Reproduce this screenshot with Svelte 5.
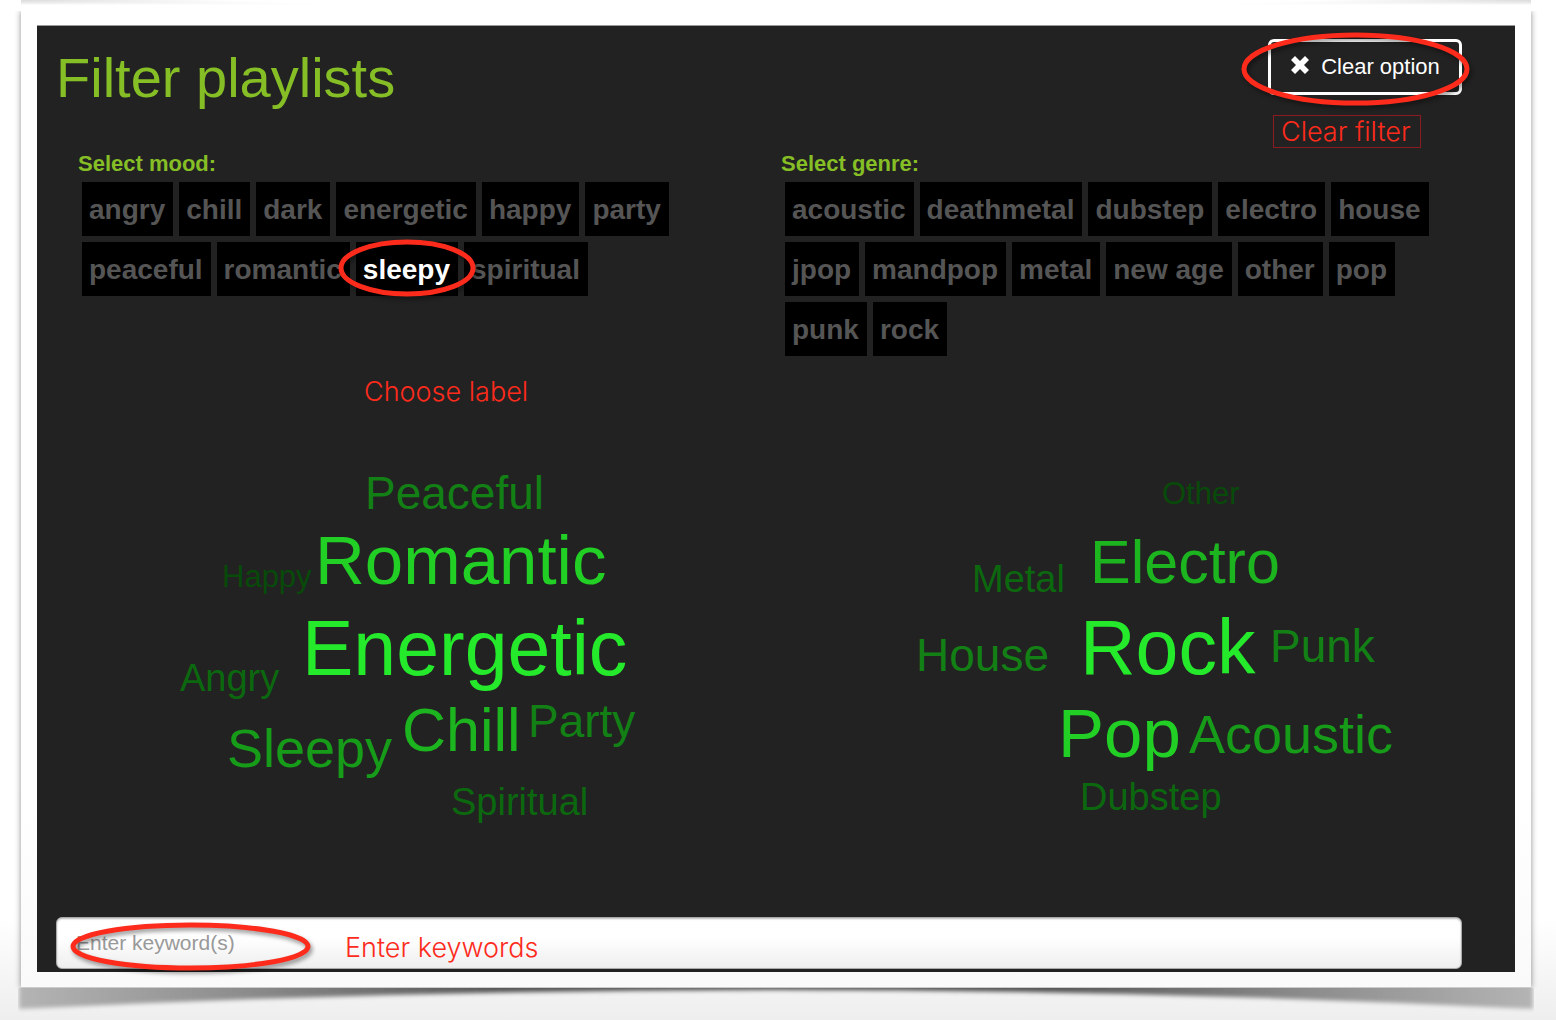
<script>
  const moods = ['angry', 'chill', 'dark', 'energetic', 'happy', 'party', 'peaceful', 'romantic', 'sleepy', 'spiritual'];
  const genres = ['acoustic', 'deathmetal', 'dubstep', 'electro', 'house', 'jpop', 'mandpop', 'metal', 'new age', 'other', 'pop', 'punk', 'rock'];
  let selected = $state('sleepy');
  let keywords = $state('');

  // x is the left edge and y the baseline of each word inside its cloud
  const moodCloud = [
    { text: 'Peaceful', size: 46, x: 186, y: 69 },
    { text: 'Romantic', size: 69, x: 136, y: 145 },
    { text: 'Happy', size: 31, x: 43, y: 147 },
    { text: 'Energetic', size: 77, x: 123, y: 235 },
    { text: 'Angry', size: 38, x: 1, y: 251 },
    { text: 'Chill', size: 61, x: 223, y: 312 },
    { text: 'Party', size: 46, x: 349, y: 297 },
    { text: 'Sleepy', size: 54, x: 48, y: 327 },
    { text: 'Spiritual', size: 38, x: 272, y: 375 }
  ];
  const genreCloud = [
    { text: 'Other', size: 31, x: 280, y: 64 },
    { text: 'Electro', size: 61, x: 208, y: 144 },
    { text: 'Metal', size: 38, x: 90, y: 152 },
    { text: 'House', size: 46, x: 34, y: 231 },
    { text: 'Rock', size: 77, x: 198, y: 234 },
    { text: 'Punk', size: 46, x: 388, y: 222 },
    { text: 'Pop', size: 69, x: 176, y: 318 },
    { text: 'Acoustic', size: 54, x: 307, y: 313 },
    { text: 'Dubstep', size: 38, x: 198, y: 370 }
  ];
  const tones = { 31: '#084a0a', 38: '#0c680f', 46: '#128015', 54: '#179c1a', 61: '#1cb41f', 69: '#21cf25', 77: '#25ea2b' };
</script>

{#snippet ring(kind)}
  <svg class="ring {kind}" viewBox="0 0 100 100" preserveAspectRatio="none" aria-hidden="true">
    <ellipse cx="50" cy="50" rx="50" ry="50" vector-effect="non-scaling-stroke" />
  </svg>
{/snippet}

{#snippet cloud(words)}
  <div class="cloud">
    {#each words as w}
      <span style="left:{w.x}px; top:{w.y - Math.round(w.size * 0.85)}px; font-size:{w.size}px; color:{tones[w.size]}">{w.text}</span>
    {/each}
  </div>
{/snippet}

{#snippet tagGroup(title, tags)}
  <section>
    <h2>{title}</h2>
    <div class="tags">
      {#each tags as tag}
        <button class="tag" class:on={selected === tag} onclick={() => (selected = tag)}>
          {tag}
          {#if tag === 'sleepy'}{@render ring('around-tag')}{/if}
        </button>
      {/each}
    </div>
  </section>
{/snippet}

<div class="page">
  <div class="previous"></div>
  <div class="sheet">
    <main>
      <header>
        <h1>Filter playlists</h1>
        <div class="clear">
          <button class="clear-button" onclick={() => (selected = '')}>
            <svg class="cross" viewBox="0 0 20 20" aria-hidden="true">
              <path d="M5 1 10 6 15 1 19 5 14 10 19 15 15 19 10 14 5 19 1 15 6 10 1 5Z" />
            </svg>
            Clear option
            {@render ring('around-clear')}
          </button>
          <span class="note boxed">Clear filter</span>
        </div>
      </header>

      <div class="filters">
        {@render tagGroup('Select mood:', moods)}
        {@render tagGroup('Select genre:', genres)}
      </div>
      <p class="note choose">Choose label</p>

      <div class="clouds">
        {@render cloud(moodCloud)}
        {@render cloud(genreCloud)}
      </div>

      <div class="search">
        <input type="text" aria-label="Enter keyword(s)" placeholder="Enter keyword(s)" bind:value={keywords} />
        {@render ring('around-input')}
        <span class="note keywords">Enter keywords</span>
      </div>
    </main>
  </div>
  <svg class="curl" viewBox="0 0 1516 32" preserveAspectRatio="none" aria-hidden="true">
    <defs>
      <linearGradient id="curl-tone">
        <stop offset="0" stop-color="#b4b4b4" />
        <stop offset="0.15" stop-color="#8c8c8c" />
        <stop offset="0.32" stop-color="#555" />
        <stop offset="0.68" stop-color="#555" />
        <stop offset="0.85" stop-color="#8c8c8c" />
        <stop offset="1" stop-color="#b4b4b4" />
      </linearGradient>
      <filter id="curl-soft" x="-2%" y="-50%" width="104%" height="200%"><feGaussianBlur stdDeviation="2" /></filter>
    </defs>
    <path d="M1-10V21Q380 2 758 2T1515 21V-10Z" fill="url(#curl-tone)" filter="url(#curl-soft)" />
  </svg>
</div>

<style>
  :global(body) { background: #fff; }
  .page {
    box-sizing: border-box;
    min-height: 100vh;
    padding: 0 25px 0 21px;
    overflow: hidden;
    background: linear-gradient(#fff 0, #fff 90%, #eee 100%);
    font-family: "Liberation Sans", Arial, sans-serif;
  }
  .previous {
    height: 11px;
    background: radial-gradient(ellipse at 50% -8px, #fff 0 60%, transparent 100%), linear-gradient(#aaa, #fff 5px);
  }
  .sheet {
    position: relative;
    padding: 14px 16px 15px;
    background: linear-gradient(#fff 80%, #fafafa);
    border-bottom: 1px solid #ccc;
    box-shadow: 0 0 6px rgba(0, 0, 0, 0.45);
    clip-path: inset(0 -12px 0 -12px);
  }
  main {
    background: #222;
    border-top: 1px solid #999;
    padding: 0 53px 3px 19px;
  }
  header {
    display: flex;
    justify-content: space-between;
    align-items: flex-start;
    height: 126px;
  }
  h1 {
    margin: 20px 0 0;
    font-size: 56px;
    line-height: 64px;
    font-weight: 400;
    color: #86be26;
  }
  .clear {
    display: flex;
    flex-direction: column;
    gap: 20px;
    padding-top: 13px;
  }
  .clear-button {
    position: relative;
    display: flex;
    align-items: center;
    justify-content: center;
    gap: 11px;
    width: 194px;
    height: 56px;
    padding: 0;
    background: #222;
    border: 3px solid #fff;
    border-radius: 6px;
    color: #fff;
    font: 22px/26px "Liberation Sans", Arial, sans-serif;
  }
  .cross { width: 20px; height: 20px; margin-bottom: 4px; fill: #fff; }
  .note {
    font-family: Inter, sans-serif;
    font-size: 27px;
    font-weight: 300;
    line-height: 31px;
    color: #fd2b1c;
  }
  .boxed {
    align-self: flex-start;
    margin-left: 5px;
    padding: 0 9px 0 7px;
    border: 1px solid #8c1a20;
  }
  .filters {
    display: grid;
    grid-template-columns: 1fr 1fr;
    min-height: 224px;
  }
  section { padding-left: 22px; }
  h2 {
    margin: 0;
    font-size: 22px;
    line-height: 24px;
    font-weight: 700;
    color: #86be26;
  }
  .tags {
    display: flex;
    flex-wrap: wrap;
    gap: 6px;
    padding: 6px 20px 0 4px;
  }
  .tag {
    position: relative;
    height: 54px;
    padding: 1px 8px 0 7px;
    border: 0;
    background: #000;
    color: #555;
    font: 700 28px/32px "Liberation Sans", Arial, sans-serif;
  }
  .tag.on { z-index: 1; color: #fff; }
  .choose { margin: 0 0 33px 308px; }
  .clouds {
    display: grid;
    grid-template-columns: 1fr 1fr;
    height: 477px;
  }
  .cloud { position: relative; margin-left: 123px; }
  .cloud span {
    position: absolute;
    line-height: 1;
    white-space: nowrap;
  }
  .search { position: relative; }
  input {
    display: block;
    box-sizing: border-box;
    width: 100%;
    height: 52px;
    padding: 0 19px;
    border: 1px solid #aaa;
    border-radius: 6px;
    background: linear-gradient(#fff 40%, #eee);
    box-shadow: inset 0 1px 2px #bbb;
    font: 21px/26px "Liberation Sans", Arial, sans-serif;
    color: #444;
  }
  input::placeholder { color: #999; opacity: 1; }
  .keywords { position: absolute; left: 289px; top: 15px; }
  .ring {
    position: absolute;
    overflow: visible;
    pointer-events: none;
    filter: drop-shadow(2px 3px 2px rgba(0, 0, 0, 0.4));
  }
  .ring ellipse { fill: none; stroke: #fd2b1c; stroke-width: 5px; }
  .around-clear { left: -27px; top: -7px; width: 223px; height: 68px; }
  .around-tag { left: -15px; top: 0; width: 132px; height: 52px; }
  .around-input { left: 17px; top: 8px; width: 235px; height: 43px; }
  .curl { display: block; width: calc(100% + 6px); height: 32px; margin-left: -3px; }
</style>
